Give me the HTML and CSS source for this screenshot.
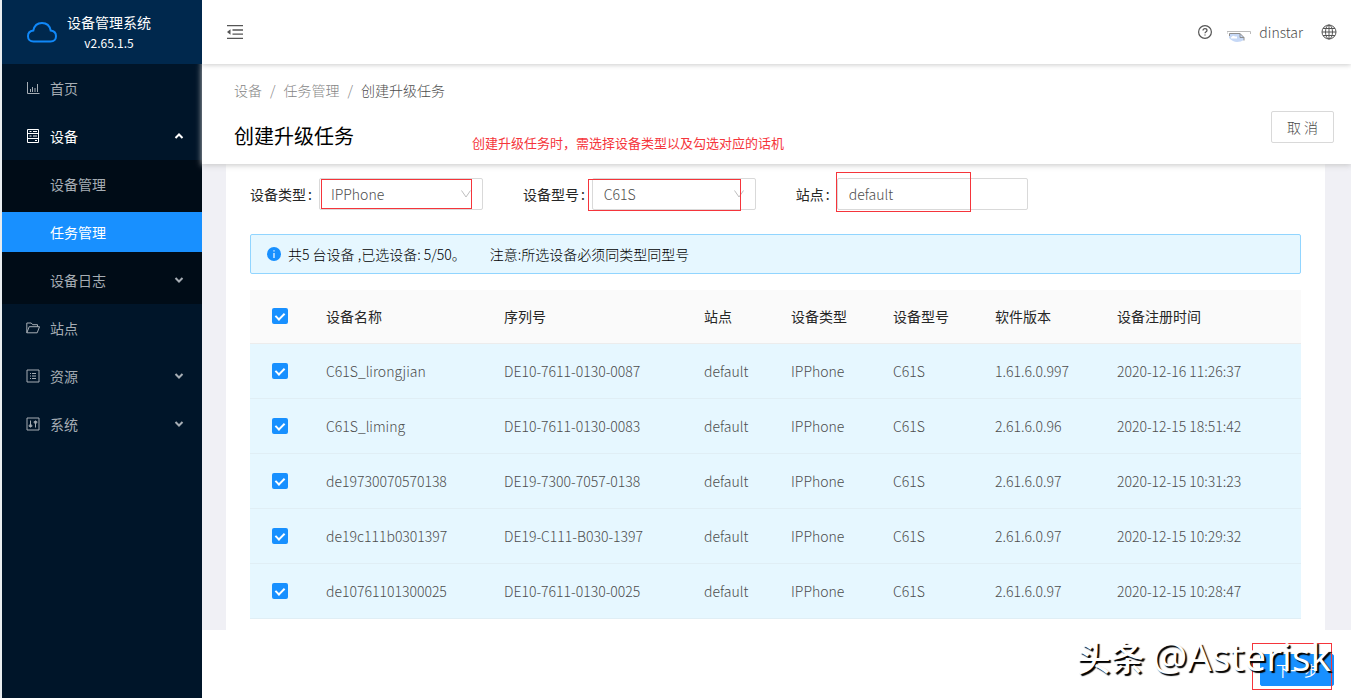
FILE: index.html
```html
<!DOCTYPE html>
<html lang="zh-CN">
<head>
<meta charset="utf-8">
<title>设备管理系统</title>
<link rel="stylesheet" href="styles.css">
</head>
<body>
<div class="shell">
  <aside class="sidebar">
    <div class="brand">
      <svg class="brand-logo" width="32" height="24" viewBox="0 0 32 24" fill="none" stroke="#1088f8" stroke-width="2"><path d="M7.500 21.500C4 21.500 2 19.200 2 16.200C2 13 4.200 11 7.300 10.600C8.300 5.500 11.500 3 16 3C20.500 3 23.700 5.500 24.700 10.600C27.800 11 30 13 30 16.200C30 19.200 28 21.500 24.500 21.500Z"/></svg>
      <div class="brand-text">
        <span class="brand-name">设备管理系统</span>
        <span class="brand-version">v2.65.1.5</span>
      </div>
    </div>
    <nav class="menu">
      <a class="item" href="#"><svg class="icon" viewBox="0 0 14 14"><path d="M1.500 1v11.500H13.500M4.500 11V8M6.500 11V6M9 11V7M11.500 11V3"/></svg>首页</a>
      <a class="item open" href="#"><svg class="icon" viewBox="0 0 14 14"><path d="M1.500 .5h11v13h-11zM1.500 4.500h11M1.500 9.500h11M3.500 2.500h2M3.500 7h2M7 2.500h4M7 7h4M9 11.500h2"/></svg>设备<svg class="caret" viewBox="0 0 10 10"><path d="M1.500 7L5 3.500L8.500 7"/></svg></a>
      <div class="submenu">
        <a class="item" href="#">设备管理</a>
        <a class="item active" href="#">任务管理</a>
        <a class="item" href="#">设备日志<svg class="caret" viewBox="0 0 10 10"><path d="M1.500 3L5 6.500L8.500 3"/></svg></a>
      </div>
      <a class="item" href="#"><svg class="icon" viewBox="0 0 14 14"><path d="M.8 11.800V2h4.400l1.500 1.700h4.800v2M.8 11.800L3.200 5.700h10.300l-2.300 6.100z"/></svg>站点</a>
      <a class="item" href="#"><svg class="icon" viewBox="0 0 14 14"><path d="M1 1h12v12H1zM4 4.500h1M6 4.500h4M4 7h1M6 7h4M4 9.500h1M6 9.500h4"/></svg>资源<svg class="caret" viewBox="0 0 10 10"><path d="M1.500 3L5 6.500L8.500 3"/></svg></a>
      <a class="item" href="#"><svg class="icon" viewBox="0 0 14 14"><path d="M1 1h12v12H1zM4.500 3.500v7M9.500 3.500v7M3.200 8h2.600v1.500H3.200zM8.200 4.500h2.600V6H8.200z"/></svg>系统<svg class="caret" viewBox="0 0 10 10"><path d="M1.500 3L5 6.500L8.500 3"/></svg></a>
    </nav>
  </aside>

  <div class="main">
    <header class="topbar">
      <button class="icon-button" type="button" aria-label="收起菜单"><svg width="16" height="16" viewBox="0 0 16 16" fill="none" stroke="#555" stroke-width="1.300"><path d="M0 1.700h16M5.500 6h10.500M5.500 10.200h10.500M0 14.400h16"/><path d="M0 8l3.500-2.700v5.400z" fill="#555" stroke="none"/></svg></button>
      <div class="topbar-tools">
        <button class="icon-button" type="button" aria-label="帮助"><svg width="14" height="14" viewBox="0 0 14 14" fill="none" stroke="#555" stroke-width="1.200"><circle cx="7" cy="7" r="6.400"/><path d="M5 5.600C5 4.300 5.800 3.600 7 3.600S9 4.400 9 5.400C9 6.700 7 6.700 7 8.300M7 9.400v1.200"/></svg></button>
        <a class="user" href="#"><svg width="24" height="12" viewBox="0 0 24 12" fill="none"><path d="M0 3V.5h23.500V3" stroke="#bbb"/><path d="M2 2.500h11l4 4v2.500q-3 2-7 2T2 7z" fill="#c6d8f6"/><path d="M4 6.500q2-3 4-1h2v2H4z" fill="#fff"/><path d="M2.500 5V2.500h10.500l4 4V9.500M13 2.500v4h4" stroke="#8e8e8e"/></svg>dinstar</a>
        <button class="icon-button" type="button" aria-label="语言"><svg width="16" height="16" viewBox="0 0 16 16" fill="none" stroke="#555"><circle cx="8" cy="8" r="7"/><ellipse cx="8" cy="8" rx="3.500" ry="7"/><path d="M8 1v14M1 8h14M2 4.500h12M2 11.500h12"/></svg></button>
      </div>
    </header>

    <section class="page-head">
      <div class="page-head-text">
        <nav class="breadcrumb"><a href="#">设备</a><span class="slash">/</span><a href="#">任务管理</a><span class="slash">/</span><span class="current">创建升级任务</span></nav>
        <h1 class="title">创建升级任务</h1>
        <p class="note">创建升级任务时，需选择设备类型以及勾选对应的话机</p>
      </div>
      <button class="button cancel" type="button">取 消</button>
    </section>

    <main class="content">
      <div class="card">
        <form class="filters">
          <div class="field"><label for="type">设备类型<span class="colon">:</span></label>
            <div class="control"><select id="type"><option>IPPhone</option></select><svg class="chevron" viewBox="0 0 12 12"><path d="M1.500 2.500L6 9L10.500 2.500"/></svg><span class="mark mark-type"></span></div></div>
          <div class="field"><label for="model">设备型号<span class="colon">:</span></label>
            <div class="control"><select id="model"><option>C61S</option></select><svg class="chevron" viewBox="0 0 12 12"><path d="M1.500 2.500L6 9L10.500 2.500"/></svg><span class="mark mark-model"></span></div></div>
          <div class="field"><label for="site">站点<span class="colon">:</span></label>
            <div class="control control-wide"><input id="site" type="text" value="default"><span class="mark mark-site"></span></div></div>
        </form>

        <div class="alert">
          <svg width="14" height="14" viewBox="0 0 14 14"><circle cx="7" cy="7" r="7" fill="#1890ff"/><path d="M7 3.200v1.400M7 6v5" stroke="#fff" stroke-width="1.200"/></svg>
          <span>共5 台设备 ,已选设备: 5/50。</span><span class="alert-tip">注意:所选设备必须同类型同型号</span>
        </div>

        <table class="devices">
          <colgroup><col class="c-check"><col class="c-name"><col class="c-serial"><col class="c-site"><col class="c-kind"><col class="c-kind"><col class="c-version"><col></colgroup>
          <thead><tr><th class="check"><input type="checkbox" aria-label="全选" checked></th><th>设备名称</th><th>序列号</th><th>站点</th><th>设备类型</th><th>设备型号</th><th>软件版本</th><th>设备注册时间</th></tr></thead>
          <tbody>
            <tr><td class="check"><input type="checkbox" aria-label="C61S_lirongjian" checked></td><td>C61S_lirongjian</td><td>DE10-7611-0130-0087</td><td>default</td><td>IPPhone</td><td>C61S</td><td>1.61.6.0.997</td><td>2020-12-16 11:26:37</td></tr>
            <tr><td class="check"><input type="checkbox" aria-label="C61S_liming" checked></td><td>C61S_liming</td><td>DE10-7611-0130-0083</td><td>default</td><td>IPPhone</td><td>C61S</td><td>2.61.6.0.96</td><td>2020-12-15 18:51:42</td></tr>
            <tr><td class="check"><input type="checkbox" aria-label="de19730070570138" checked></td><td>de19730070570138</td><td>DE19-7300-7057-0138</td><td>default</td><td>IPPhone</td><td>C61S</td><td>2.61.6.0.97</td><td>2020-12-15 10:31:23</td></tr>
            <tr><td class="check"><input type="checkbox" aria-label="de19c111b0301397" checked></td><td>de19c111b0301397</td><td>DE19-C111-B030-1397</td><td>default</td><td>IPPhone</td><td>C61S</td><td>2.61.6.0.97</td><td>2020-12-15 10:29:32</td></tr>
            <tr><td class="check"><input type="checkbox" aria-label="de10761101300025" checked></td><td>de10761101300025</td><td>DE10-7611-0130-0025</td><td>default</td><td>IPPhone</td><td>C61S</td><td>2.61.6.0.97</td><td>2020-12-15 10:28:47</td></tr>
          </tbody>
        </table>
      </div>
    </main>

    <footer class="footer">
      <div class="next"><button class="button primary" type="button">下一步</button><span class="mark mark-next"></span></div>
      <span class="watermark">头条 <span class="watermark-name">@Asterisk</span></span>
    </footer>
  </div>
</div>
</body>
</html>
```
FILE: styles.css
```css
*, *::after { box-sizing: border-box; }

body {
  margin: 0;
  background: #e9edf0;
  color: #4d4d4d;
  font: 300 14px/22px "Noto Sans CJK SC", sans-serif;
}

a { color: inherit; text-decoration: none; }
button, input, select { font: inherit; color: inherit; }
svg { flex: none; }

.shell { display: flex; min-height: 100vh; padding-left: 2px; }

/* sidebar */
.sidebar { flex: none; width: 200px; background: #001529; }
.brand {
  position: relative;
  z-index: 3;
  display: flex;
  align-items: center;
  gap: 9px;
  height: 64px;
  padding-left: 24px;
  background: #00284d;
  color: #fff;
}
.brand-text { display: flex; flex-direction: column; align-items: center; font-weight: 400; }
.brand-name { line-height: 22px; }
.brand-version { font-size: 12px; line-height: 20px; }
.item {
  display: flex;
  align-items: center;
  height: 40px;
  margin: 4px 0 8px;
  padding: 0 18px 1px 24px;
  color: #a6adb4;
  font-weight: 400;
}
.item.open, .item.active { color: #fff; }
.item.open { margin-bottom: 4px; }
.submenu { padding: 4px 0; background: #000c17; }
.submenu .item { margin: 0 0 8px; padding-left: 48px; }
.submenu .item:last-child { margin-bottom: 0; }
.submenu .item.active { background: #1890ff; }
.icon { width: 14px; height: 14px; margin-right: 10px; fill: none; stroke: currentColor; }
.caret { width: 10px; height: 10px; margin-left: auto; fill: none; stroke: currentColor; stroke-width: 2; }

/* top bar */
.main { display: flex; flex: 1; flex-direction: column; min-width: 0; background: #fff; }
.topbar {
  position: relative;
  z-index: 2;
  display: flex;
  align-items: center;
  justify-content: space-between;
  height: 64px;
  padding: 0 14px 0 25px;
  background: #fff;
  box-shadow: 0 1px 5px #ccc;
}
.topbar-tools { display: flex; align-items: center; gap: 15px; }
.topbar-tools .user { display: flex; align-items: center; gap: 8px; margin-right: 3px; }
.user svg { margin-top: 9px; }
.icon-button { display: flex; padding: 0; border: 0; background: none; }

/* page heading */
.page-head {
  position: relative;
  z-index: 1;
  display: flex;
  align-items: flex-start;
  justify-content: space-between;
  min-height: 100px;
  padding: 15px 17px 10px 32px;
  background: #fff;
  box-shadow: 0 1px 6px #c4c4c4;
}
.breadcrumb { display: flex; color: #858585; }
.slash { margin: 0 8px; }
.current { color: #4d4d4d; }
.title { margin: 19px 0 0; color: #000; font-size: 20px; font-weight: 400; line-height: 32px; }
.note { position: absolute; top: 68px; left: 270px; margin: 0; color: #f5353b; font-size: 13px; font-weight: 400; }
.button {
  height: 32px;
  padding: 0 15px;
  border: 1px solid #d9d9d9;
  border-radius: 2px;
  background: #fff;
}
.button.cancel { margin-top: 32px; }
.button.primary { border-color: #1890ff; background: #1890ff; color: #fff; font-weight: 400; }

/* content */
.content { padding: 0 26px 0 24px; background: #f0f0f5; }
.card { padding: 14px 24px 11px; background: #fff; }
.filters { display: flex; gap: 40px; }
.field { display: flex; align-items: center; }
.field label { color: #262626; font-weight: 400; white-space: nowrap; }
.colon { margin: 0 7px 0 2px; }
.control { position: relative; width: 164px; }
.control-wide { width: 191px; }
.control select, .control input {
  display: block;
  width: 100%;
  height: 32px;
  padding: 0 11px;
  border: 1px solid #d9d9d9;
  border-radius: 2px;
  outline: 0;
  background: #fff;
  appearance: none;
}
.chevron { position: absolute; top: 10px; right: 11px; width: 12px; height: 12px; fill: none; stroke: #bfbfbf; }

/* red annotation frames */
.mark { position: absolute; border: 1px solid #f5353b; pointer-events: none; }
.mark-type { inset: 1px 11px 1px 2px; }
.mark-model { inset: 1px 15px -1px -4px; }
.mark-site { inset: -6px 57px -2px -1px; }
.mark-next { inset: -11px 2px -4px -8px; }

.alert {
  display: flex;
  align-items: center;
  gap: 7px;
  min-height: 40px;
  margin: 24px 0 16px;
  padding: 0 16px;
  border: 1px solid #91d5ff;
  border-radius: 2px;
  background: #e6f7ff;
  color: #000;
}
.alert-tip { margin-left: 17px; }

.devices { width: 100%; border-collapse: separate; border-spacing: 0; table-layout: fixed; }
.c-check { width: 60px; }
.c-name { width: 178px; }
.c-serial { width: 200px; }
.c-site { width: 87px; }
.c-kind { width: 102px; }
.c-version { width: 122px; }
.devices th, .devices td {
  height: 55px;
  padding: 0 16px;
  border-bottom: 1px solid #e0eef5;
  text-align: left;
  white-space: nowrap;
}
.devices th {
  height: 54px;
  padding-bottom: 2px;
  border-color: #ececec;
  background: #fafafa;
  color: #262626;
  font-weight: 400;
}
.devices td { background: #e6f7ff; }
.devices td.check { padding: 0; }
.devices th.check { padding: 0 0 2px; }
.check input {
  display: flex;
  align-items: flex-start;
  justify-content: center;
  width: 16px;
  height: 16px;
  margin: 0 auto;
  padding-top: 3px;
  border-radius: 2px;
  background: #1890ff;
  appearance: none;
}
.check input:checked::after {
  content: "";
  width: 6px;
  height: 9px;
  border: solid #fff;
  border-width: 0 2px 2px 0;
  transform: rotate(45deg);
}

/* footer */
.footer {
  position: relative;
  display: flex;
  flex: 1;
  align-items: flex-start;
  justify-content: flex-end;
  min-height: 68px;
  padding: 24px 17px 12px;
}
.next { position: relative; }
.watermark {
  position: absolute;
  top: 2px;
  right: 20px;
  color: #fff;
  font-size: 34px;
  font-weight: 500;
  line-height: 48px;
  text-shadow: 2px 2px 1px #000;
  white-space: nowrap;
  pointer-events: none;
}
.watermark-name { font: 400 39px/48px "Open Sans", sans-serif; }
```
